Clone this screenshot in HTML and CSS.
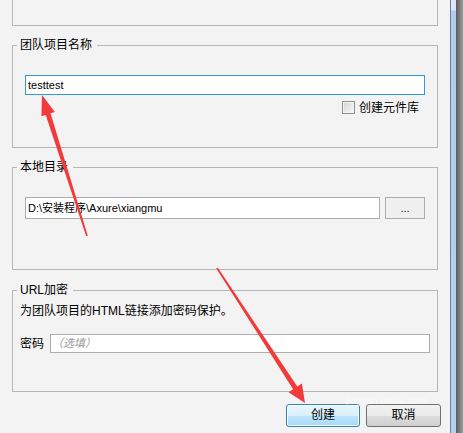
FILE: index.html
```html
<!DOCTYPE html>
<html lang="zh-CN">
<head>
<meta charset="utf-8">
<title>新建团队项目</title>
<link rel="stylesheet" href="styles.css">
</head>
<body>
<div class="window">
  <div class="content">
    <div class="group group-top"></div>

    <div class="group g-name">
      <div class="legend">团队项目名称</div>
      <div class="field field-active name-field">testtest</div>
      <div class="check-row">
        <span class="checkbox"></span>
        <span class="check-label">创建元件库</span>
      </div>
    </div>

    <div class="group g-dir">
      <div class="legend">本地目录</div>
      <div class="dir-row">
        <div class="field dir-field">D:\安装程序\Axure\xiangmu</div>
        <button class="browse">...</button>
      </div>
    </div>

    <div class="group g-url">
      <div class="legend">URL加密</div>
      <div class="desc">为团队项目的HTML链接添加密码保护。</div>
      <div class="pwd-row">
        <span class="pwd-label">密码</span>
        <div class="field pwd-field"><span class="placeholder">（选填）</span></div>
      </div>
    </div>

    <div class="actions">
      <button class="btn btn-primary">创建</button>
      <button class="btn">取消</button>
    </div>
  </div>

  <div class="frame">
    <div class="frame-line"></div>
    <div class="frame-blue"></div>
    <div class="frame-dark"></div>
  </div>

  <span class="watermark">jingyan.baidu.com</span>

  <svg class="arrows" width="463" height="433" viewBox="0 0 463 433">
    <polygon fill="#f23a3a" points="42,95 54.8,112 50.5,113.3 87.8,235.8 86.2,236.2 45.7,114.9 41.4,116.2"/>
    <polygon fill="#f23a3a" points="305,403 288.5,392.3 293.1,389.3 216.3,268.4 217.7,267.6 297.3,386.5 301.9,383.5"/>
  </svg>
</div>
</body>
</html>
```

FILE: styles.css
```css
html, body {
  margin: 0;
  padding: 0;
  background: #f3f3f3;
}

body {
  font-family: "Liberation Sans", "Noto Sans CJK SC", sans-serif;
  font-size: 12px;
  color: #000;
}

.window {
  position: relative;
  display: flex;
  width: 463px;
  height: 433px;
  overflow: hidden;
}

.content {
  width: 450px;
  height: 433px;
  background: #f3f3f3;
}

.group {
  box-sizing: border-box;
  width: 426px;
  margin-left: 12px;
  border: 1px solid #b6b6b6;
  padding: 0 7px;
}

.group-top {
  height: 26px;
  border-top: none;
}

.g-name {
  margin-top: 19px;
  height: 103px;
}

.g-dir {
  margin-top: 19px;
  height: 103px;
}

.g-url {
  margin-top: 20px;
  height: 102px;
}

.legend {
  display: table;
  margin: -8px 0 0 -3px;
  padding: 0 5px 0 3px;
  height: 14px;
  line-height: 14px;
  background: #f3f3f3;
}

.field {
  box-sizing: border-box;
  background: #fff;
  border: 1px solid #adadad;
  padding-left: 2px;
  white-space: nowrap;
  overflow: hidden;
  font-size: 11px;
}

.name-field {
  margin: 23px 5px 0 5px;
  height: 20px;
  line-height: 18px;
}

.field-active {
  border-color: #3399d6;
}

.check-row {
  display: flex;
  justify-content: flex-end;
  align-items: center;
  margin: 6px 11px 0 0;
  height: 13px;
}

.checkbox {
  box-sizing: border-box;
  width: 13px;
  height: 13px;
  border: 1px solid #8e8f8f;
  background: linear-gradient(135deg, #d2d2d2 0%, #ebebeb 60%, #fbfbfb 100%);
  box-shadow: inset 0 0 0 1px #f4f4f4;
  margin-right: 4px;
}

.check-label {
  line-height: 14px;
}

.dir-row {
  display: flex;
  margin: 23px 5px 0 5px;
  height: 22px;
}

.dir-field {
  width: 355px;
  height: 22px;
  line-height: 20px;
}

.browse {
  box-sizing: border-box;
  width: 40px;
  height: 22px;
  margin-left: 5px;
  padding: 0;
  border: 1px solid #adadad;
  background: #f0f0f0;
  font-family: "Liberation Sans", sans-serif;
  font-size: 11px;
  line-height: 18px;
  color: #222;
}

.desc {
  margin-top: 7px;
  height: 14px;
  line-height: 14px;
  white-space: nowrap;
}

.pwd-row {
  display: flex;
  align-items: center;
  margin-top: 16px;
  height: 19px;
}

.pwd-label {
  width: 30px;
  line-height: 14px;
}

.pwd-field {
  flex: 1;
  height: 19px;
  line-height: 17px;
  padding-left: 1px;
}

.placeholder {
  color: #9a9a9a;
  font-style: italic;
}

.actions {
  display: flex;
  justify-content: flex-end;
  gap: 6px;
  margin-top: 12px;
  padding-right: 9px;
}

.btn {
  box-sizing: border-box;
  width: 75px;
  height: 23px;
  padding: 0;
  border: 1px solid #707070;
  border-radius: 3px;
  background: linear-gradient(#f2f2f2 0%, #ebebeb 50%, #dddddd 51%, #cfcfcf 100%);
  font-family: "Liberation Sans", "Noto Sans CJK SC", sans-serif;
  font-size: 12px;
  color: #000;
  line-height: 21px;
}

.btn-primary {
  width: 74px;
  border-color: #3c7fb1;
  background: linear-gradient(#eaf6fd 0%, #d9f0fc 50%, #bee6fd 51%, #a7d9f5 100%);
  box-shadow: inset 0 0 0 1px #f6fbfe;
}

.frame {
  display: flex;
  width: 13px;
  height: 433px;
}

.frame-line {
  width: 1px;
  background: #6f7f90;
}

.frame-blue {
  width: 5px;
  background: linear-gradient(#dce8f5 0, #dce8f5 10px, #aecdf0 11px, #b4d2f2 100%);
}

.frame-dark {
  width: 7px;
  background: linear-gradient(to right, #5a5a5a, #7a7a7a 45%, #9c9c9c);
}

.watermark {
  position: absolute;
  left: 346px;
  top: 395px;
  font-family: "Liberation Sans", sans-serif;
  font-size: 10px;
  line-height: 12px;
  color: rgba(255, 255, 255, 0.55);
  pointer-events: none;
}

.arrows {
  position: absolute;
  left: 0;
  top: 0;
  pointer-events: none;
}
```
